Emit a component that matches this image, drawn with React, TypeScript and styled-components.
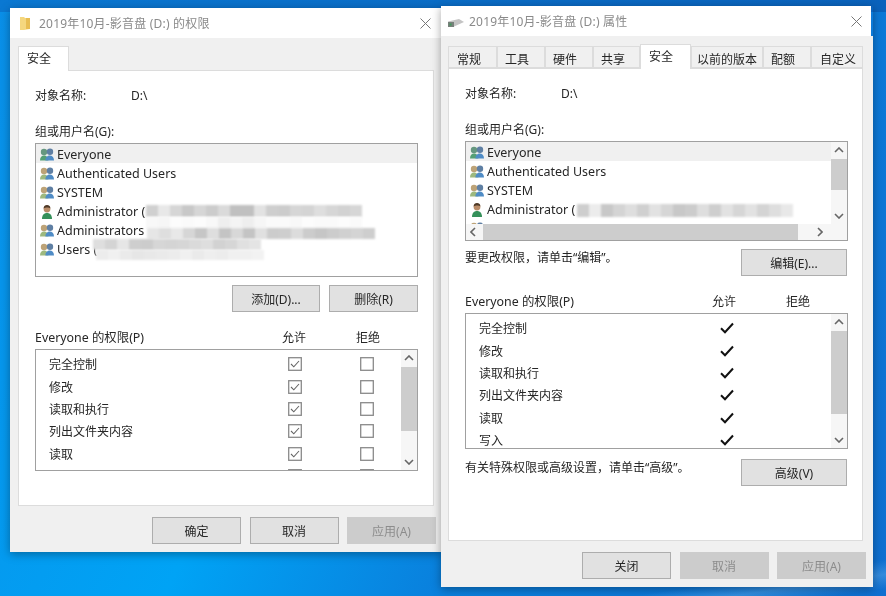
import styled, { createGlobalStyle } from "styled-components";

const GlobalStyle = createGlobalStyle`
  html, body {
    margin: 0;
    padding: 0;
    overflow: hidden;
  }
`;

const Desktop = styled.div`
  position: relative;
  width: 886px;
  height: 596px;
  overflow: hidden;
  font-family: "Noto Sans", "Noto Sans CJK SC", sans-serif;
  font-size: 12px;
  color: #262626;
  background:
    linear-gradient(172deg, transparent 0 95%, rgba(120, 190, 245, 0.35) 97%, transparent 99%),
    linear-gradient(115deg, #0a8fe8 0%, #00a3f5 38%, #0a7fdc 62%, #0f6fd0 100%);
`;

const TopShade = styled.div`
  position: absolute;
  inset: 0 0 auto 0;
  height: 12px;
  background: linear-gradient(90deg, #0a78d2, #0a62bc);
`;

const Window = styled.div<{ $x: number; $y: number; $h: number }>`
  position: absolute;
  left: ${(p) => p.$x}px;
  top: ${(p) => p.$y}px;
  width: 432px;
  height: ${(p) => p.$h}px;
  display: flex;
  flex-direction: column;
  box-shadow: 0 2px 9px rgba(0, 0, 0, 0.35);
  filter: blur(0.35px);
`;

const TitleBar = styled.div<{ $inset: number; $pad: number; $end: number }>`
  height: 30px;
  flex: none;
  margin-right: ${(p) => p.$inset}px;
  padding: 0 ${(p) => p.$end}px 0 ${(p) => p.$pad}px;
  background: #fff;
  display: flex;
  align-items: center;
  color: #8a8a8a;
`;

const TitleIcon = styled.svg<{ $drop?: number }>`
  flex: none;
  margin-top: ${(p) => p.$drop ?? 0}px;
`;

const TitleText = styled.span<{ $gap: number }>`
  margin-left: ${(p) => p.$gap}px;
  flex: 1;
  white-space: nowrap;
  letter-spacing: 0.2px;
`;

const Body = styled.div<{ $pad: number }>`
  flex: 1;
  background: #f0f0f0;
  padding: 8px 0 0 ${(p) => p.$pad}px;
  display: flex;
  flex-direction: column;
`;

const Tabs = styled.div`
  display: flex;
  height: 24px;
  align-items: flex-end;
`;

const Tab = styled.div<{ $w: number; $pl: number; $active?: boolean }>`
  width: ${(p) => p.$w}px;
  box-sizing: border-box;
  height: ${(p) => (p.$active ? "25px" : "22px")};
  margin-bottom: ${(p) => (p.$active ? "-1px" : "0")};
  padding: ${(p) => (p.$active ? "0 0 3px" : "3px 0 0")} ${(p) => p.$pl}px;
  padding-right: 0;
  display: flex;
  align-items: center;
  white-space: nowrap;
  background: ${(p) => (p.$active ? "#fff" : "#f0f0f0")};
  border: 1px solid #dcdcdc;
  border-bottom: ${(p) => (p.$active ? "none" : "1px solid #dcdcdc")};
  position: relative;
  z-index: ${(p) => (p.$active ? 1 : 0)};
`;

const Panel = styled.div<{ $w: number; $h: number }>`
  box-sizing: border-box;
  width: ${(p) => p.$w}px;
  height: ${(p) => p.$h}px;
  background: #fff;
  border: 1px solid #dcdcdc;
  padding: 16px 0 0 16px;
  display: flex;
  flex-direction: column;
`;

const NameLine = styled.div<{ $w: number }>`
  height: 16px;
  line-height: 18px;
  display: grid;
  grid-template-columns: ${(p) => p.$w}px 1fr;
`;

const Label = styled.div<{ $mt?: number }>`
  height: 16px;
  line-height: 18px;
  margin-top: ${(p) => p.$mt ?? 0}px;
`;

const ListBox = styled.div<{ $h: number }>`
  position: relative;
  box-sizing: border-box;
  width: 383px;
  height: ${(p) => p.$h}px;
  margin-top: 4px;
  border: 1px solid #a0a0a0;
  display: flex;
  flex-direction: column;
  overflow: hidden;
`;

const ListMain = styled.div`
  flex: 1;
  min-height: 0;
  display: flex;
`;

const UserRows = styled.div`
  flex: 1;
  min-width: 0;
  overflow: hidden;
`;

const UserRow = styled.div<{ $selected?: boolean }>`
  box-sizing: border-box;
  height: 19px;
  padding: 2px 0 0 4px;
  display: flex;
  align-items: center;
  gap: 3px;
  font-size: 12.5px;
  white-space: nowrap;
  background: ${(p) => (p.$selected ? "#f0f0f0" : "transparent")};
`;

const VScroll = styled.div<{ $thumb: number }>`
  width: 16px;
  flex: none;
  background: #f6f6f6;
  display: flex;
  flex-direction: column;
  align-items: center;
  padding: 5px 0 5px;
  box-sizing: border-box;

  i {
    display: block;
    width: 16px;
    height: ${(p) => p.$thumb}px;
    background: #cdcdcd;
  }
`;

const HScroll = styled.div`
  height: 16px;
  flex: none;
  background: #f6f6f6;
  display: flex;
  align-items: center;
  padding: 0 24px 0 4px;

  i {
    display: block;
    width: 315px;
    height: 16px;
    background: #cdcdcd;
    margin: 0 auto 0 7px;
  }
`;

const UpArrow = styled.svg`
  display: block;
  flex: none;
  margin-bottom: 6px;
`;

const DownArrow = styled.svg`
  display: block;
  flex: none;
  margin-top: auto;
`;

const SideArrow = styled.svg`
  display: block;
  flex: none;
`;

const Mosaic = styled.div<{ $x: number; $y: number; $h: number }>`
  position: absolute;
  left: ${(p) => p.$x}px;
  top: ${(p) => p.$y}px;
  height: ${(p) => p.$h}px;
  display: flex;
  filter: blur(0.8px);
`;

const MosaicCell = styled.div`
  width: 12px;
  height: 100%;
`;

const ButtonRow = styled.div<{ $between?: boolean; $mt: number }>`
  box-sizing: border-box;
  width: 383px;
  margin-top: ${(p) => p.$mt}px;
  padding-right: ${(p) => (p.$between ? 1 : 0)}px;
  display: flex;
  align-items: flex-start;
  justify-content: ${(p) => (p.$between ? "space-between" : "flex-end")};
  gap: 9px;
`;

const Hint = styled.div`
  height: 16px;
  line-height: 18px;
`;

const Button = styled.button<{ $w?: number; $h?: number }>`
  width: ${(p) => p.$w ?? 89}px;
  height: ${(p) => p.$h ?? 27}px;
  flex: none;
  margin: 0;
  padding: 0;
  font: inherit;
  color: #262626;
  background: #e1e1e1;
  border: 1px solid #adadad;

  &:disabled {
    background: #cccccc;
    border-color: #cccccc;
    color: #8c8c8c;
  }
`;

const PermHeader = styled.div`
  height: 16px;
  line-height: 18px;
  margin-top: 17px;
  display: grid;
  grid-template-columns: 247px 74px 1fr;

  span:first-child {
    font-size: 12.4px;
  }
`;

const PermBox = styled.div<{ $h: number }>`
  box-sizing: border-box;
  width: 383px;
  height: ${(p) => p.$h}px;
  margin-top: 4px;
  border: 1px solid #a0a0a0;
  display: flex;
  overflow: hidden;
`;

const PermRows = styled.div`
  flex: 1;
  min-width: 0;
  padding-top: 3px;
  overflow: hidden;
`;

const PermRow = styled.div<{ $col: number }>`
  height: 22.4px;
  padding-left: 13px;
  display: grid;
  grid-template-columns: ${(p) => p.$col}px 72px 1fr;
  align-items: center;
`;

const Check = styled.svg`
  display: block;
`;

const Footer = styled.div<{ $w: number }>`
  width: ${(p) => p.$w}px;
  margin-top: 11px;
  display: flex;
  justify-content: flex-end;
  gap: 8.5px;
`;

type UserKind = "everyone" | "auth" | "admin";

function UserIcon({ kind }: { kind: UserKind }) {
  if (kind === "admin") {
    return (
      <svg width="14" height="16" viewBox="0 0 14 16">
        <path d="M2 15c0-4 2-6 5-6s5 2 5 6z" fill="#35905a" />
        <circle cx="7" cy="5" r="3.4" fill="#b98c68" />
        <path d="M3.600 4.600C3.600 2 5.400 1 7 1s3.400 1 3.400 3.400C9 3.400 5.400 3.200 3.600 4.600z" fill="#4e3a28" />
      </svg>
    );
  }
  return (
    <svg width="14" height="16" viewBox="0 0 14 16">
      <circle cx="4" cy="5" r="3.200" fill={kind === "everyone" ? "#66987f" : "#bda377"} />
      <path d="M0 13.500c0-3.200 1.800-5 4-5s4.400 1.800 4.400 5z" fill={kind === "everyone" ? "#55a075" : "#9db97f"} />
      <circle cx="10" cy="4.800" r="3.200" fill="#5f7fa3" />
      <path d="M5.400 13.500c0-3.200 2.200-5 4.400-5S14 10.300 14 13.500z" fill="#4f8cc6" />
    </svg>
  );
}

function Up() {
  return (
    <UpArrow width="10" height="6" viewBox="0 0 10 6">
      <path d="M1 5l4-4 4 4" fill="none" stroke="#666" strokeWidth="1.600" />
    </UpArrow>
  );
}

function Down() {
  return (
    <DownArrow width="10" height="6" viewBox="0 0 10 6">
      <path d="M1 1l4 4 4-4" fill="none" stroke="#666" strokeWidth="1.600" />
    </DownArrow>
  );
}

function CloseIcon() {
  return (
    <svg width="11" height="11" viewBox="0 0 11 11">
      <path d="M.5.500l10 10M10.500.500l-10 10" stroke="#777" strokeWidth="1" fill="none" />
    </svg>
  );
}

function CheckBox({ checked }: { checked?: boolean }) {
  return (
    <Check width="14" height="14" viewBox="0 0 14 14">
      <rect x=".7" y=".7" width="12.600" height="12.600" fill="#fff" stroke="#8a8a8a" strokeWidth="1.300" />
      {checked && <path d="M3 7l2.800 2.800L11 4" fill="none" stroke="#666" strokeWidth="1.100" />}
    </Check>
  );
}

function BigCheck() {
  return (
    <Check width="14" height="12" viewBox="0 0 14 12">
      <path d="M1 6.200l4 4L13 1.500" fill="none" stroke="#111" strokeWidth="2" />
    </Check>
  );
}

function Strip({ x, y, h, shades }: { x: number; y: number; h: number; shades: number[] }) {
  return (
    <Mosaic $x={x} $y={y} $h={h}>
      {shades.map((s, i) => (
        <MosaicCell key={i} style={{ background: `rgb(${s},${s},${s})` }} />
      ))}
    </Mosaic>
  );
}

const leftUsers: [UserKind, string, boolean?][] = [
  ["everyone", "Everyone", true],
  ["auth", "Authenticated Users"],
  ["auth", "SYSTEM"],
  ["admin", "Administrator ("],
  ["auth", "Administrators"],
  ["auth", "Users ("],
];

const perms = ["完全控制", "修改", "读取和执行", "列出文件夹内容", "读取", "写入"];

const rightTabs: [string, number, number][] = [
  ["常规", 49, 8],
  ["工具", 48, 7],
  ["硬件", 48, 7],
  ["共享", 47, 7],
  ["安全", 51, 8],
  ["以前的版本", 72, 5],
  ["配额", 48, 7],
  ["自定义", 52, 8],
];

export default function App() {
  return (
    <Desktop>
      <GlobalStyle />
      <TopShade />

      <Window $x={10} $y={8} $h={544}>
        <TitleBar $inset={0} $pad={10} $end={11}>
          <TitleIcon width="10" height="14" viewBox="0 0 10 14">
            <path d="M0 1h4l1 1h5v11l-6 1H0z" fill="#f5d77e" />
            <path d="M6 2h4v11H6z" fill="#e8bd52" />
          </TitleIcon>
          <TitleText $gap={9}>2019年10月-影音盘 (D:) 的权限</TitleText>
          <CloseIcon />
        </TitleBar>
        <Body $pad={8}>
          <Tabs>
            <Tab $w={51} $pl={8} $active>安全</Tab>
          </Tabs>
          <Panel $w={416} $h={436}>
            <NameLine $w={96}>
              <span>对象名称:</span>
              <span>D:\</span>
            </NameLine>
            <Label $mt={20}>组或用户名(G):</Label>
            <ListBox $h={134}>
              <UserRows>
                {leftUsers.map(([kind, name, sel]) => (
                  <UserRow key={name} $selected={sel}>
                    <UserIcon kind={kind} />
                    {name}
                  </UserRow>
                ))}
              </UserRows>
              <Strip x={110} y={61} h={12} shades={[208, 232, 214, 200, 214, 204, 218, 192, 192, 226, 206, 204, 214, 212, 222, 214, 210, 214]} />
              <Strip x={110} y={73} h={11} shades={[248, 246, 252, 250, 252, 248, 238, 244, 238, 246, 250, 250, 248, 252, 250, 250, 252, 250]} />
              <Strip x={111} y={84} h={11} shades={[230, 222, 232, 214, 198, 222, 196, 216, 196, 224, 204, 206, 220, 204, 198, 204, 208, 212, 206]} />
              <Strip x={57} y={95} h={11} shades={[222, 212, 230, 206, 204, 214, 212, 214, 218, 222, 210, 214, 224, 228]} />
              <Strip x={60} y={106} h={10} shades={[236, 240, 234, 230, 232, 234, 236, 240, 234, 238, 236, 240, 240, 242]} />
            </ListBox>
            <ButtonRow $mt={8}>
              <Button $w={88}>添加(D)...</Button>
              <Button>删除(R)</Button>
            </ButtonRow>
            <PermHeader>
              <span>Everyone 的权限(P)</span>
              <span>允许</span>
              <span>拒绝</span>
            </PermHeader>
            <PermBox $h={122}>
              <PermRows>
                {perms.map((p, i) => (
                  <PermRow key={p} $col={239}>
                    <span>{i < 5 && p}</span>
                    <CheckBox checked />
                    <CheckBox />
                  </PermRow>
                ))}
              </PermRows>
              <VScroll $thumb={64}>
                <Up />
                <i />
                <Down />
              </VScroll>
            </PermBox>
          </Panel>
          <Footer $w={418}>
            <Button>确定</Button>
            <Button>取消</Button>
            <Button disabled>应用(A)</Button>
          </Footer>
        </Body>
      </Window>

      <Window $x={441} $y={6} $h={581}>
        <TitleBar $inset={2} $pad={7} $end={9}>
          <TitleIcon width="16" height="10" viewBox="0 0 16 10" $drop={4}>
            <path d="M0 3.500L11 1l5 3-11 5H0z" fill="#c4c4c4" />
            <path d="M0 4h6v5H0z" fill="#77807a" />
            <path d="M1.500 5.500h2v2h-2z" fill="#3d9a5a" />
          </TitleIcon>
          <TitleText $gap={5}>2019年10月-影音盘 (D:) 属性</TitleText>
          <CloseIcon />
        </TitleBar>
        <Body $pad={7}>
          <Tabs>
            {rightTabs.map(([name, w, pl]) => (
              <Tab key={name} $w={w} $pl={pl} $active={name === "安全"}>{name}</Tab>
            ))}
          </Tabs>
          <Panel $w={415} $h={473}>
            <NameLine $w={96}>
              <span>对象名称:</span>
              <span>D:\</span>
            </NameLine>
            <Label $mt={20}>组或用户名(G):</Label>
            <ListBox $h={100}>
              <ListMain>
                <UserRows>
                  {leftUsers.slice(0, 4).map(([kind, name, sel]) => (
                    <UserRow key={name} $selected={sel}>
                      <UserIcon kind={kind} />
                      {name}
                    </UserRow>
                  ))}
                  <UserRow>
                    <UserIcon kind="auth" />
                  </UserRow>
                </UserRows>
                <VScroll $thumb={31}>
                  <Up />
                  <i />
                  <Down />
                </VScroll>
              </ListMain>
              <HScroll>
                <SideArrow width="6" height="10" viewBox="0 0 6 10">
                  <path d="M5 1L1 5l4 4" fill="none" stroke="#666" strokeWidth="1.600" />
                </SideArrow>
                <i />
                <SideArrow width="6" height="10" viewBox="0 0 6 10">
                  <path d="M1 1l4 4-4 4" fill="none" stroke="#666" strokeWidth="1.600" />
                </SideArrow>
              </HScroll>
              <Strip x={111} y={62} h={13} shades={[206, 236, 200, 212, 222, 208, 226, 214, 200, 204, 222, 206, 226, 214, 226, 212, 222, 232]} />
            </ListBox>
            <ButtonRow $between $mt={8}>
              <Hint>要更改权限，请单击“编辑”。</Hint>
              <Button $w={106}>编辑(E)...</Button>
            </ButtonRow>
            <PermHeader>
              <span>Everyone 的权限(P)</span>
              <span>允许</span>
              <span>拒绝</span>
            </PermHeader>
            <PermBox $h={136}>
              <PermRows>
                {perms.map((p) => (
                  <PermRow key={p} $col={241}>
                    <span>{p}</span>
                    <BigCheck />
                    <span />
                  </PermRow>
                ))}
              </PermRows>
              <VScroll $thumb={83}>
                <Up />
                <i />
                <Down />
              </VScroll>
            </PermBox>
            <ButtonRow $between $mt={10}>
              <Hint>有关特殊权限或高级设置，请单击“高级”。</Hint>
              <Button $w={106}>高级(V)</Button>
            </ButtonRow>
          </Panel>
          <Footer $w={418}>
            <Button>关闭</Button>
            <Button disabled>取消</Button>
            <Button disabled>应用(A)</Button>
          </Footer>
        </Body>
      </Window>
    </Desktop>
  );
}
